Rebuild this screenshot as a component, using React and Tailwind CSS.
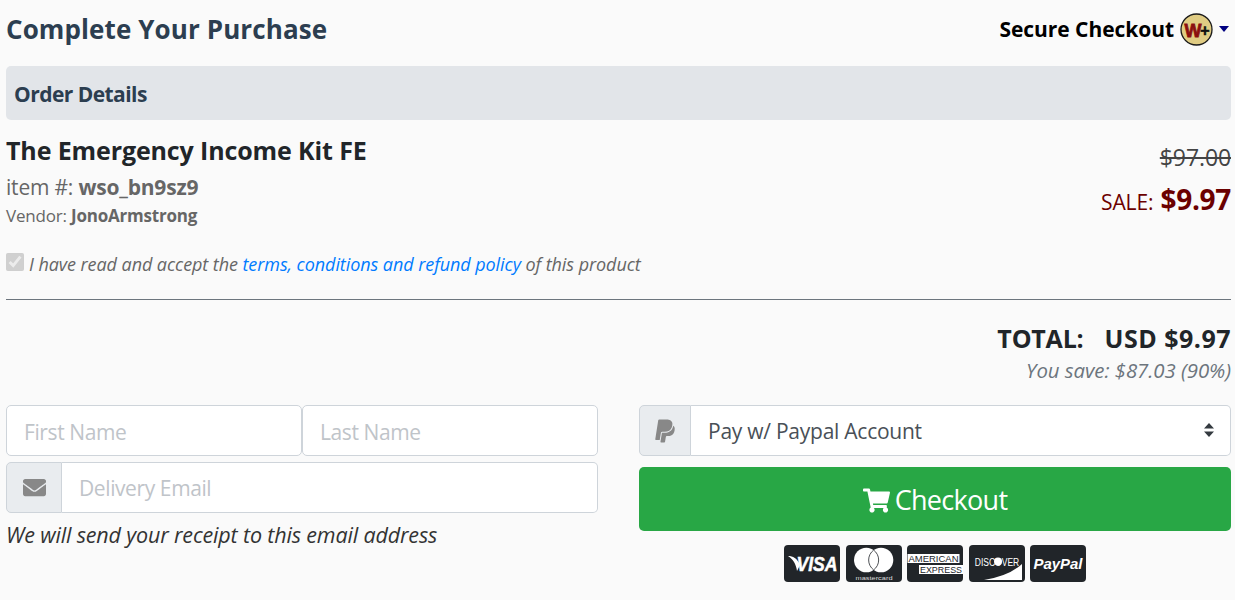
import React from 'react';
import { FaEnvelope, FaPaypal, FaShoppingCart } from 'react-icons/fa';

const cardFont = "'Liberation Sans', sans-serif";

const CardBase = ({ children }) => (
  <svg width="56" height="37" viewBox="0 0 56 37" className="block">
    <rect x="0" y="0" width="56" height="37" rx="4" fill="#212529" />
    {children}
  </svg>
);

const Visa = () => (
  <CardBase>
    <path d="M4 11 C9 11 13 13 16 20 L13 26 C12 19 9 14 4 11 Z" fill="#fff" />
    <g transform="translate(33 26) scale(0.88 1)">
      <text textAnchor="middle" fontFamily={cardFont} fontWeight="700" fontStyle="italic" fontSize="20" fill="#fff" stroke="#fff" strokeWidth="0.5">VISA</text>
    </g>
  </CardBase>
);

const Mastercard = () => (
  <CardBase>
    <circle cx="20.3" cy="15" r="12.3" fill="#fff" />
    <circle cx="35" cy="15" r="12.3" fill="#fff" />
    <path d="M27.65 5.1 A12.3 12.3 0 0 1 27.65 24.9 A12.3 12.3 0 0 1 27.65 5.1 Z" fill="none" stroke="#212529" strokeWidth="0.8" />
    <text x="28" y="34.5" textAnchor="middle" fontFamily={cardFont} fontSize="6" fill="#ddd" textLength="37" lengthAdjust="spacingAndGlyphs">mastercard</text>
  </CardBase>
);

const Amex = () => (
  <CardBase>
    <rect x="0.5" y="9" width="52" height="9" fill="#fff" />
    <rect x="12" y="20" width="44" height="9" fill="#fff" />
    <text x="26.5" y="16.8" textAnchor="middle" fontFamily={cardFont} fontSize="9" fill="#212529" textLength="50" lengthAdjust="spacingAndGlyphs">AMERICAN</text>
    <text x="34" y="27.8" textAnchor="middle" fontFamily={cardFont} fontSize="9" fill="#212529" textLength="42" lengthAdjust="spacingAndGlyphs">EXPRESS</text>
  </CardBase>
);

const Discover = () => (
  <CardBase>
    <g transform="translate(28 20.5) scale(0.74 1)">
      <text textAnchor="middle" fontFamily={cardFont} fontSize="11.5" fill="#fff">DISCOVER</text>
    </g>
    <circle cx="29" cy="16.5" r="4" fill="#fff" />
    <path d="M15 35 Q40 31 53 19 L53 35 Z" fill="#fff" />
  </CardBase>
);

const Paypal = () => (
  <CardBase>
    <text x="28" y="23.5" textAnchor="middle" fontFamily={cardFont} fontWeight="700" fontStyle="italic" fontSize="14.5" fill="#fff" textLength="49" lengthAdjust="spacingAndGlyphs">PayPal</text>
  </CardBase>
);

const WLogo = () => (
  <svg width="33" height="33" viewBox="0 0 33 33" className="block">
    <circle cx="16.5" cy="16.5" r="15.5" fill="#e0cc83" stroke="#1a1a1a" strokeWidth="1.3" />
    <text x="13" y="24" textAnchor="middle" fontFamily={cardFont} fontWeight="700" fontSize="18" fill="#8b0f0f" stroke="#8b0f0f" strokeWidth="0.8" textLength="17" lengthAdjust="spacingAndGlyphs">W</text>
    <text x="25" y="23" textAnchor="middle" fontFamily={cardFont} fontWeight="700" fontSize="16" fill="#111" stroke="#111" strokeWidth="0.5">+</text>
  </svg>
);

export default function App() {
  return (
    <div className="min-h-[600px] bg-[#fafafa] pl-[6px] pr-[4px] font-['Open_Sans',sans-serif] text-[#212529] overflow-hidden">
      <div className="flex items-center justify-between h-[60px] pb-[1px]">
        <h1 className="text-[26px] font-bold text-[#2c3e50] tracking-[0.1px]">Complete Your Purchase</h1>
        <div className="flex items-center text-black">
          <span className="text-[21px] font-bold tracking-[-0.05px]">Secure Checkout</span>
          <span className="ml-[6px]"><WLogo /></span>
          <span className="ml-[6px] mr-[2px] mt-[-2px] w-0 h-0 border-x-[5px] border-x-transparent border-t-[6px] border-t-[#000080]"></span>
        </div>
      </div>

      <div className="mt-[6px] h-[54px] bg-[#e2e5e9] rounded-[5px] flex items-center px-[8px] pt-[3px]">
        <h2 className="text-[21px] font-bold text-[#2c3e50] tracking-[-0.55px]">Order Details</h2>
      </div>

      <div className="flex justify-between mt-[12px]">
        <div>
          <div className="text-[25px] leading-[37px] font-bold tracking-[-0.12px]">The Emergency Income Kit FE</div>
          <div className="text-[21px] leading-[36px] text-[#666] tracking-[-0.2px]">item #: <b className="font-bold">wso_bn9sz9</b></div>
          <div className="text-[17px] leading-[22px] text-[#666] tracking-[-0.2px]">Vendor: <b className="font-bold">JonoArmstrong</b></div>
        </div>
        <div className="text-right">
          <div className="text-[23px] leading-[38px] mt-[6px] text-[#444] line-through tracking-[-0.1px]">$97.00</div>
          <div className="flex items-baseline justify-end mt-[2px] text-[#6b0000]">
            <span className="text-[21px] tracking-[-0.1px]">SALE:</span>
            <span className="ml-[7px] text-[28px] font-bold tracking-[-0.3px]">$9.97</span>
          </div>
        </div>
      </div>

      <label className="flex items-center mt-[23px] h-[28px] text-[18px] italic text-[#666] tracking-[-0.07px]">
        <input type="checkbox" checked disabled readOnly className="w-[18px] h-[18px] m-0 mr-[5px] mb-[4px]" />
        <span>I have read and accept the <a href="#" className="text-[#007bff]">terms, conditions and refund policy</a> of this product</span>
      </label>

      <hr className="mt-[21px] border-t border-[#6c757d]" />

      <div className="text-right mt-[20px]">
        <div className="text-[25px] leading-[36px] font-bold tracking-[-0.2px]">TOTAL:<span className="ml-[21px] tracking-[0.5px]">USD $9.97</span></div>
        <div className="text-[20.4px] leading-[28px] italic text-[#6c757d] tracking-[-0.05px]">You save: $87.03 (90%)</div>
      </div>

      <div className="grid grid-cols-2 gap-x-[41px] mt-[21px]">
        <div>
          <div className="flex">
            <input placeholder="First Name" className="w-1/2 h-[51px] px-[17px] pt-[2px] text-[21px] tracking-[-0.4px] bg-white border border-[#ced4da] rounded-[5px] placeholder:text-[#bfc4c9]" />
            <input placeholder="Last Name" className="w-1/2 h-[51px] px-[17px] pt-[2px] text-[21px] tracking-[-0.4px] bg-white border border-[#ced4da] rounded-[5px] placeholder:text-[#bfc4c9]" />
          </div>
          <div className="flex mt-[6px]">
            <span className="flex items-center justify-center w-[56px] h-[51px] bg-[#e9ecef] border border-[#ced4da] rounded-l-[5px] text-[#888]">
              <FaEnvelope size={23} />
            </span>
            <input placeholder="Delivery Email" className="flex-1 min-w-0 h-[51px] px-[17px] text-[21px] tracking-[-0.4px] bg-white border border-l-0 border-[#ced4da] rounded-r-[5px] placeholder:text-[#bfc4c9]" />
          </div>
          <p className="mt-[6px] text-[21.5px] leading-[32px] italic text-[#333] tracking-[-0.15px]">We will send your receipt to this email address</p>
        </div>

        <div>
          <div className="flex">
            <span className="flex items-center justify-center w-[52px] h-[51px] bg-[#e9ecef] border border-[#ced4da] rounded-l-[5px] text-[#888]">
              <FaPaypal size={26} />
            </span>
            <div className="relative flex-1 min-w-0">
              <select className="w-full h-[51px] pl-[17px] pt-[3px] text-[21px] tracking-[-0.25px] text-[#495057] bg-white border border-l-0 border-[#ced4da] rounded-r-[5px] appearance-none">
                <option>Pay w/ Paypal Account</option>
              </select>
              <svg width="10" height="14" viewBox="0 0 10 14" className="absolute right-[17px] top-[18px] pointer-events-none">
                <path d="M5 0 L10 5.5 L0 5.5 Z M5 14 L0 8.5 L10 8.5 Z" fill="#343a40" />
              </svg>
            </div>
          </div>
          <button className="flex items-center justify-center w-full h-[64px] mt-[11px] pt-[2px] bg-[#28a745] text-white text-[27px] tracking-[-0.7px] rounded-[5px]">
            <FaShoppingCart size={27} className="mr-[5px]" />
            Checkout
          </button>
          <div className="flex justify-center gap-[5.5px] mt-[14px]">
            <Visa />
            <Mastercard />
            <Amex />
            <Discover />
            <Paypal />
          </div>
        </div>
      </div>
    </div>
  );
}
